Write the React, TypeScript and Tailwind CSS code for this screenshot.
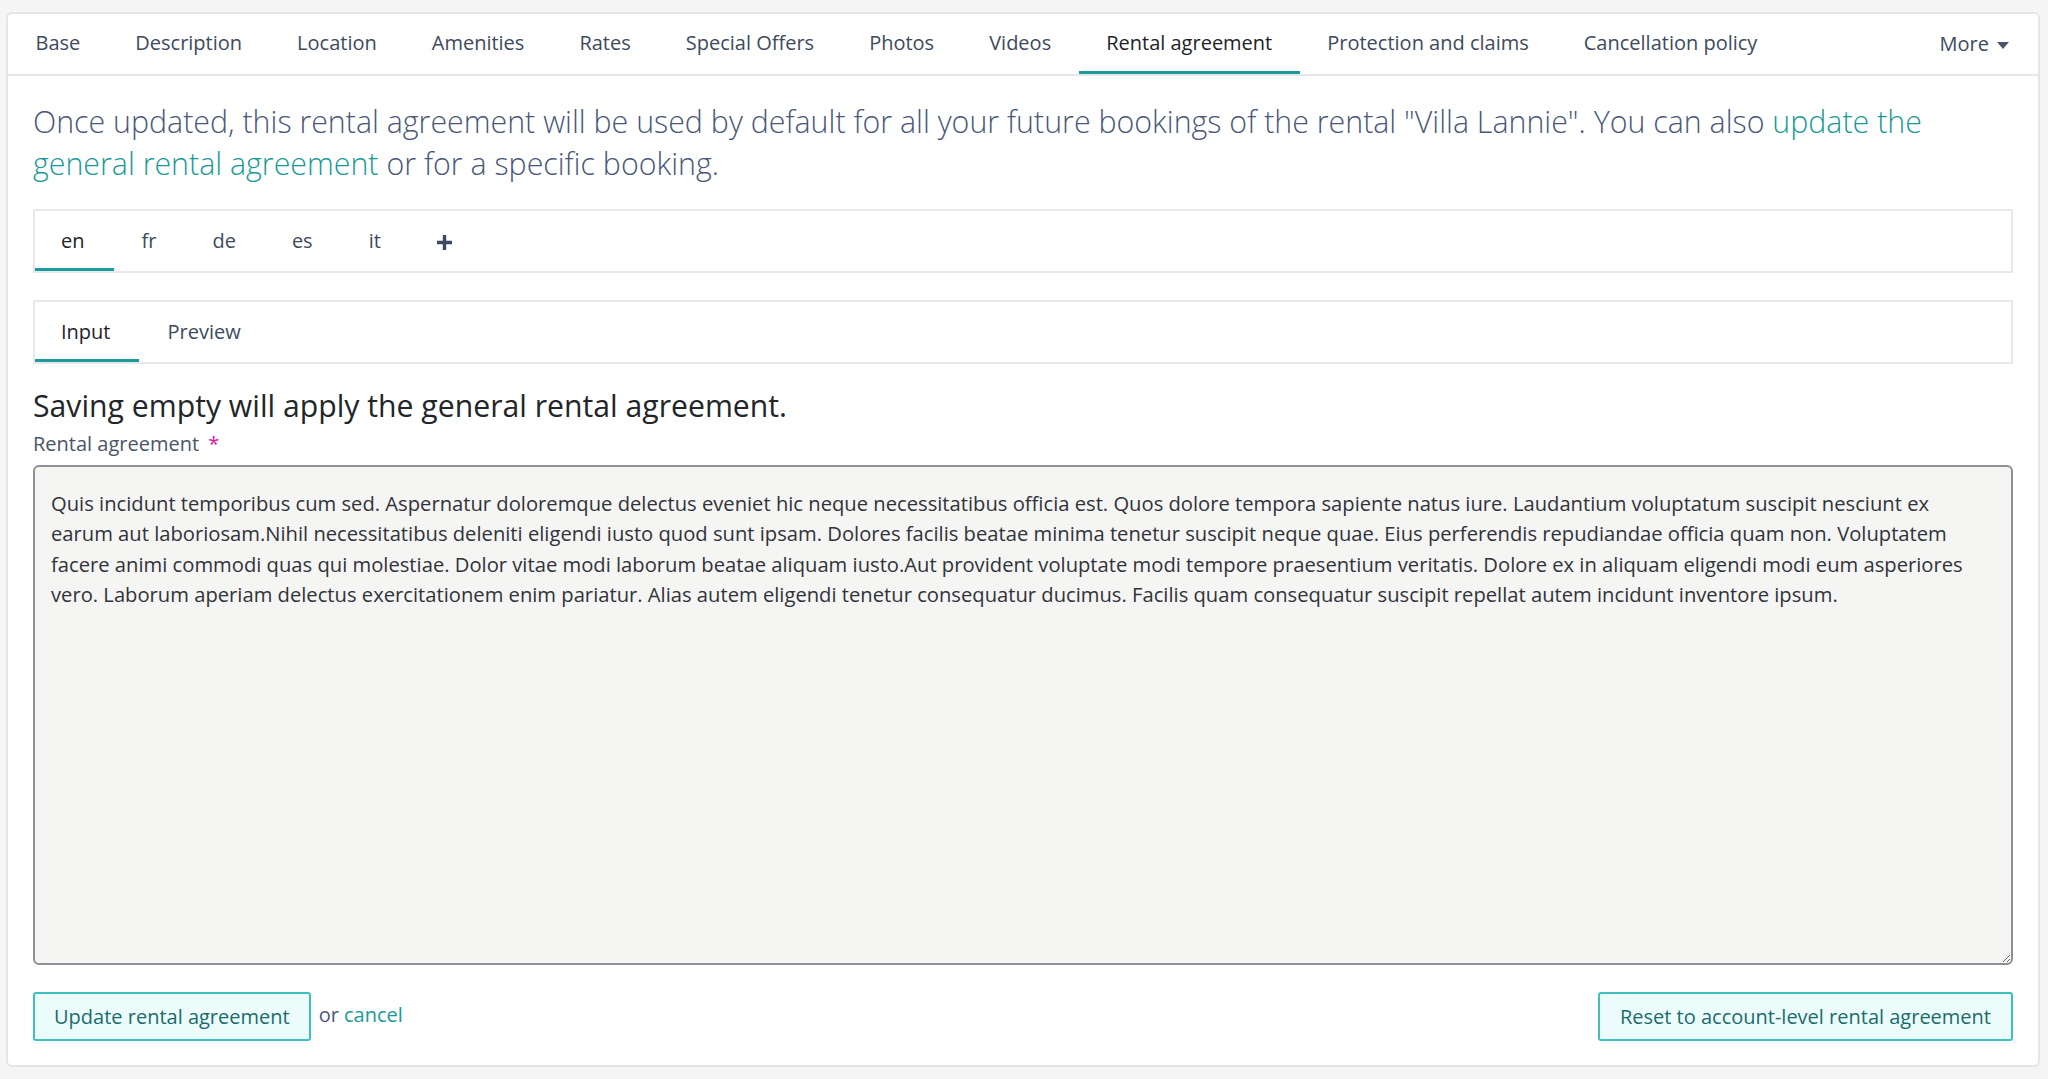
import { useState } from "react";

const navTabs = [
    "Base",
    "Description",
    "Location",
    "Amenities",
    "Rates",
    "Special Offers",
    "Photos",
    "Videos",
    "Rental agreement",
    "Protection and claims",
    "Cancellation policy",
];

const languages = ["en", "fr", "de", "es", "it"];

const agreementText =
    "Quis incidunt temporibus cum sed. Aspernatur doloremque delectus eveniet hic neque necessitatibus officia est. Quos dolore tempora sapiente natus iure. Laudantium voluptatum suscipit nesciunt ex earum aut laboriosam.Nihil necessitatibus deleniti eligendi iusto quod sunt ipsam. Dolores facilis beatae minima tenetur suscipit neque quae. Eius perferendis repudiandae officia quam non. Voluptatem facere animi commodi quas qui molestiae. Dolor vitae modi laborum beatae aliquam iusto.Aut provident voluptate modi tempore praesentium veritatis. Dolore ex in aliquam eligendi modi eum asperiores vero. Laborum aperiam delectus exercitationem enim pariatur. Alias autem eligendi tenetur consequatur ducimus. Facilis quam consequatur suscipit repellat autem incidunt inventore ipsum.";

export default function App() {
    const [activeTab] = useState("Rental agreement");
    const [lang, setLang] = useState("en");
    const [mode, setMode] = useState<"input" | "preview">("input");
    const [text, setText] = useState(agreementText);

    return (
        <div
            className="min-h-[1079px] bg-[#f5f5f5] pt-[12px] pl-[6px] pr-[8px]"
            style={{ fontFamily: '"Open Sans", sans-serif' }}
        >
            <div className="rounded-md border-2 border-[#e4e5e9] bg-white">
                {/* Top navigation */}
                <div className="flex h-[62px] items-stretch border-b-2 border-[#e6e7eb]">
                    {navTabs.map((tab) => (
                        <div
                            key={tab}
                            className={
                                tab === activeTab
                                    ? "flex items-center border-b-[3px] border-[#1b9b9b] px-[27.5px] text-[20px] text-[#1f2329]"
                                    : "flex items-center border-b-[3px] border-transparent px-[27.5px] text-[20px] text-[#3e4a5d]"
                            }
                        >
                            {tab}
                        </div>
                    ))}
                    <div className="ml-auto flex items-center gap-[8px] pr-[29px] text-[20px] text-[#3e4a5d]">
                        More
                        <svg width="12" height="7" viewBox="0 0 12 7" className="mt-[3px]">
                            <path d="M0 0h12L6 7z" fill="#4a5568" />
                        </svg>
                    </div>
                </div>

                <div className="px-[25px] pt-[25px] pb-[24px]">
                    <p className="text-[30.35px] font-light leading-[42px] text-[#4a5779]">
                        Once updated, this rental agreement will be used by default for all your future bookings of the rental "Villa Lannie". You can also{" "}
                        <a className="text-[#1a9a97]">update the general rental agreement</a> or for a specific booking.
                    </p>

                    {/* Language tabs */}
                    <div className="mt-[24px] flex h-[64px] items-stretch border-2 border-[#e8e8ea]">
                        {languages.map((l) => (
                            <button
                                key={l}
                                onClick={() => setLang(l)}
                                className={
                                    l === lang
                                        ? "flex items-center justify-center border-b-[3px] border-[#1b9b9b] pl-[26px] pr-[29px] pt-[3px] text-[20px] text-[#1f2329]"
                                        : "flex items-center justify-center border-b-[3px] border-transparent px-[28px] pt-[3px] text-[20px] text-[#3e4a5d]"
                                }
                            >
                                {l}
                            </button>
                        ))}
                        <button className="flex items-center justify-center px-[28px] pt-[3px]">
                            <svg width="15" height="15" viewBox="0 0 15 15">
                                <path d="M5.8 0h3.4v5.8H15v3.4H9.2V15H5.8V9.2H0V5.8h5.8z" fill="#3e4a5d" />
                            </svg>
                        </button>
                    </div>

                    {/* Input / Preview */}
                    <div className="mt-[27px] flex h-[64px] items-stretch border-2 border-[#e8e8ea]">
                        <button
                            onClick={() => setMode("input")}
                            className={
                                mode === "input"
                                    ? "flex items-center justify-center border-b-[3px] border-[#1b9b9b] pl-[26px] pr-[29px] pt-[3px] text-[20px] text-[#1f2329]"
                                    : "flex items-center justify-center border-b-[3px] border-transparent px-[28px] pt-[3px] text-[20px] text-[#3e4a5d]"
                            }
                        >
                            Input
                        </button>
                        <button
                            onClick={() => setMode("preview")}
                            className={
                                mode === "preview"
                                    ? "flex items-center justify-center border-b-[3px] border-[#1b9b9b] px-[28px] pt-[3px] text-[20px] text-[#1f2329]"
                                    : "flex items-center justify-center border-b-[3px] border-transparent px-[28px] pt-[3px] text-[20px] text-[#3e4a5d]"
                            }
                        >
                            Preview
                        </button>
                    </div>

                    <h2 className="mt-[23px] text-[30.2px] leading-[38px] text-[#232629]">
                        Saving empty will apply the general rental agreement.
                    </h2>

                    <label className="mt-[5px] block text-[20px] leading-[28px] text-[#4a5568]">
                        Rental agreement <span className="ml-[4px] text-[#e2189f]">*</span>
                    </label>

                    <textarea
                        value={text}
                        onChange={(e) => setText(e.target.value)}
                        className="mt-[7px] block h-[500px] w-full resize-y rounded-[6px] border-2 border-[#8f8f99] bg-[#f5f5f4] pl-[16px] pr-[22px] pt-[21px] text-[20.2px] leading-[30.3px] text-[#303338] outline-none"
                    />

                    <div className="mt-[27px] flex items-center">
                        <button className="h-[49px] rounded-[3px] border-2 border-[#3fc0c0] bg-[#ebfcfb] px-[19px] text-[20px] text-[#1c6b6d]">
                            Update rental agreement
                        </button>
                        <span className="ml-[8px] -mt-[4px] text-[20px] text-[#4a5779]">
                            or <a className="text-[#1a9a97]">cancel</a>
                        </span>
                        <button className="ml-auto h-[49px] rounded-[3px] border-2 border-[#3fc0c0] bg-[#ebfcfb] px-[20px] text-[20px] text-[#1c6b6d]">
                            Reset to account-level rental agreement
                        </button>
                    </div>
                </div>
            </div>
        </div>
    );
}
